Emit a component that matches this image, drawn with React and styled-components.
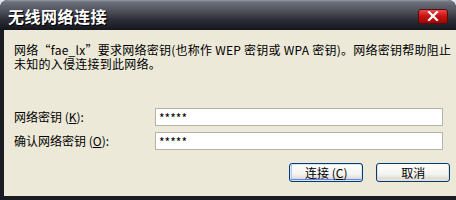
import styled, { createGlobalStyle } from "styled-components";

const Global = createGlobalStyle`
  html, body {
    margin: 0;
    padding: 0;
    background: #dfe3ea;
  }
  body {
    font-family: "SimSun", "Noto Sans CJK SC", sans-serif;
  }
`;

const Win = styled.div`
  width: 456px;
  height: 200px;
  display: flex;
  flex-direction: column;
  box-sizing: border-box;
  border-radius: 8px 8px 0 0;
  overflow: hidden;
  background: #1b1b23;
`;

const TitleBar = styled.div`
  height: 30px;
  flex: none;
  display: flex;
  align-items: center;
  justify-content: space-between;
  padding: 0 8px 0 8px;
  box-sizing: border-box;
  background: linear-gradient(
    to bottom,
    #9a9ea8 0px,
    #6c707b 2px,
    #52555f 10px,
    #2c2d36 20px,
    #15151c 30px
  );
`;

const Title = styled.span`
  color: #fff;
  font-family: "Noto Sans CJK SC", sans-serif;
  font-weight: 700;
  font-size: 16px;
  letter-spacing: 0.5px;
  text-shadow: 1px 1px 0 #000;
  padding-top: 2px;
`;

const Close = styled.div`
  width: 30px;
  height: 15px;
  margin-top: 2px;
  border-radius: 3px;
  border: 1px solid #5a0b0b;
  background: linear-gradient(to bottom, #f04a4a 0%, #c81414 45%, #a00808 100%);
  display: flex;
  align-items: center;
  justify-content: center;
  box-sizing: border-box;
`;

const Frame = styled.div`
  flex: 1;
  padding: 0 4px 4px 4px;
  display: flex;
`;

const Client = styled.div`
  flex: 1;
  background: #ece9d8;
  padding: 13px 10px 0 10px;
  display: flex;
  flex-direction: column;
  font-size: 12px;
  line-height: 14px;
  color: #000;
`;

const Message = styled.div`
  margin: 0 0 37px 0;
  white-space: nowrap;
  letter-spacing: 0.25px;
`;

const Line = styled.div`
  height: 14px;
`;

const Row = styled.div`
  display: flex;
  align-items: center;
  height: 18px;
  margin-bottom: 6px;
`;

const Label = styled.label`
  width: 141px;
  flex: none;
  u {
    text-decoration: underline;
  }
`;

const Field = styled.input`
  width: 288px;
  height: 18px;
  box-sizing: border-box;
  border: 1px solid #b5b3a8;
  background: #fff;
  font-family: "Noto Sans CJK SC", sans-serif;
  font-size: 12px;
  padding: 0 3px;
  outline: none;
`;

const Buttons = styled.div`
  display: flex;
  justify-content: flex-end;
  gap: 13px;
  padding-right: 1px;
  margin-top: 7px;
`;

const Button = styled.button`
  width: 74px;
  height: 19px;
  box-sizing: border-box;
  border: 1px solid #003c74;
  border-radius: 3px;
  font-family: "SimSun", "Noto Sans CJK SC", sans-serif;
  font-size: 12px;
  line-height: 15px;
  padding: 0;
  color: #000;
  background: linear-gradient(to bottom, #ffffff 0%, #f3f3ef 60%, #d6d0c5 100%);
  box-shadow: ${(p) =>
    p.$default
      ? "inset 0 0 0 1px #cee7ff, inset 0 -1px 0 1px #6982ee, inset 1px 0 0 1px #b5c8f5"
      : "inset 0 -1px 0 1px #e3e0d5"};
`;

export default function App() {
  return (
    <>
      <Global />
      <Win>
        <TitleBar>
          <Title>无线网络连接</Title>
          <Close>
            <svg width="12" height="10" viewBox="0 0 12 10">
              <path
                d="M2 1 L10 9 M10 1 L2 9"
                stroke="#fff"
                strokeWidth="2.2"
                strokeLinecap="square"
              />
            </svg>
          </Close>
        </TitleBar>
        <Frame>
          <Client>
            <Message>
              <Line>网络“fae_lx”要求网络密钥(也称作 WEP 密钥或 WPA 密钥)。网络密钥帮助阻止</Line>
              <Line>未知的入侵连接到此网络。</Line>
            </Message>
            <Row>
              <Label>
                网络密钥 (<u>K</u>):
              </Label>
              <Field readOnly value="*****" />
            </Row>
            <Row>
              <Label>
                确认网络密钥 (<u>O</u>):
              </Label>
              <Field readOnly value="*****" />
            </Row>
            <Buttons>
              <Button $default>
                连接 (<u>C</u>)
              </Button>
              <Button>取消</Button>
            </Buttons>
          </Client>
        </Frame>
      </Win>
    </>
  );
}
